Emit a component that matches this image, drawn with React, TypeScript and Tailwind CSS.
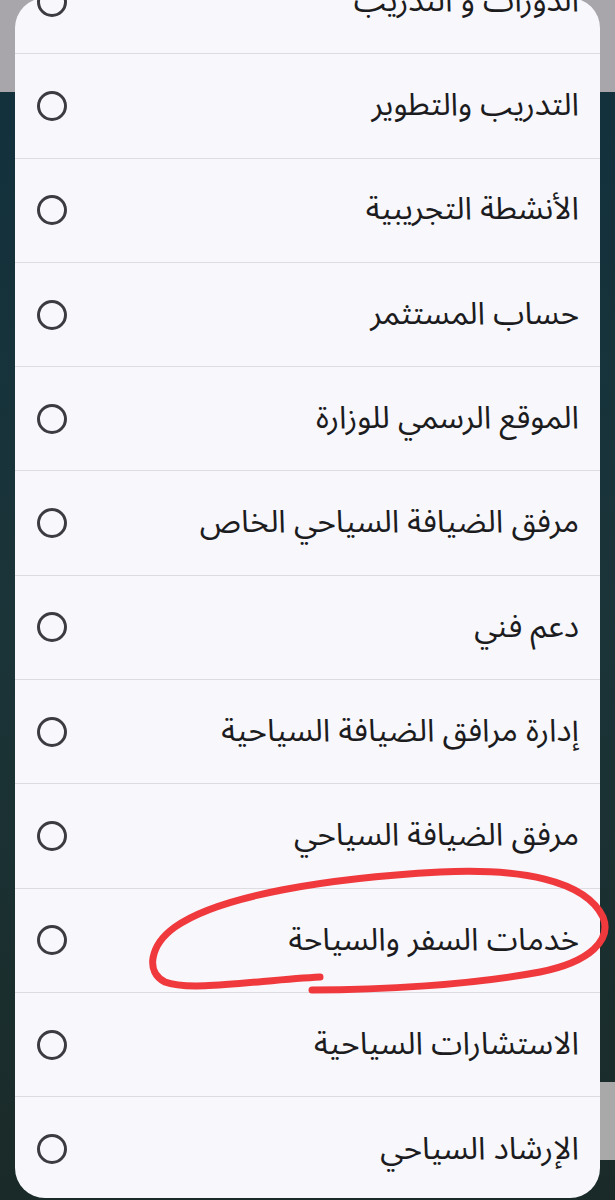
const items = [
  'الدورات و التدريب',
  'التدريب والتطوير',
  'الأنشطة التجريبية',
  'حساب المستثمر',
  'الموقع الرسمي للوزارة',
  'مرفق الضيافة السياحي الخاص',
  'دعم فني',
  'إدارة مرافق الضيافة السياحية',
  'مرفق الضيافة السياحي',
  'خدمات السفر والسياحة',
  'الاستشارات السياحية',
  'الإرشاد السياحي',
]

function Radio() {
  return <div className="w-[30px] h-[30px] rounded-full border-[3px] border-[#3c3b41] shrink-0" />
}

export default function App() {
  return (
    <div className="relative w-[615px] h-[1200px] overflow-hidden bg-[#13303a]">
      <div className="flex flex-col h-full">
        <div className="h-[92px] bg-[#a8a6aa]" />
        <div className="flex-1 bg-gradient-to-b from-[#12313d] via-[#1b3438] to-[#1a2a28]" />
      </div>
      <div className="absolute right-0 top-[1082px] w-[20px] h-[78px] bg-[#a9a9a9]" />

      <div className="absolute left-[15px] right-[15px] top-[-2px] bottom-[2px] rounded-[30px] bg-[#f7f7fc] overflow-hidden">
        <div className="-mt-[48px]">
          {items.map((t, i) => (
            <div
              key={i}
              dir="rtl"
              className={`flex items-center justify-between h-[104.3px] pr-[21px] pl-[22px] ${i < items.length - 1 ? 'border-b border-[#dcdce1]' : ''}`}
            >
              <span
                className="text-[31.5px] text-[#1c1c1e] leading-none"
                style={{ fontFamily: '"Noto Sans Arabic", "Noto Sans", "DejaVu Sans", sans-serif' }}
              >
                {t}
              </span>
              <Radio />
            </div>
          ))}
        </div>
      </div>

      <svg className="absolute inset-0 pointer-events-none" width="615" height="1200" viewBox="0 0 615 1200">
        <path
          d="M320 977 C 260 980, 190 992, 165 982 C 145 972, 150 945, 175 927 C 220 895, 330 878, 440 872 C 520 868, 585 880, 603 917 C 612 940, 590 962, 540 972 C 470 985, 380 990, 312 990"
          fill="none"
          stroke="#f0393d"
          strokeWidth="7"
          strokeLinecap="round"
        />
      </svg>
    </div>
  )
}
